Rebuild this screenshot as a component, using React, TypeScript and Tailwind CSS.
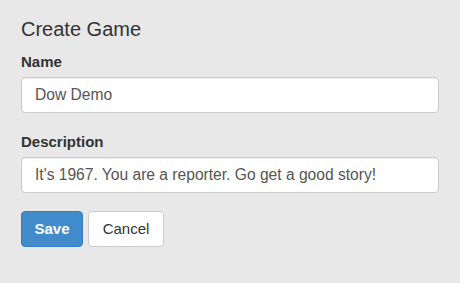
import React from 'react';

export default function App() {
  return (
    <div className="w-[460px] h-[283px] bg-[#e8e8e8] px-[21px] pt-[18px] text-[#333] font-['Liberation_Sans',Arial,sans-serif]">
      <h2 className="text-[20px] leading-[22px] font-normal">Create Game</h2>
      <form className="mt-[12px]" onSubmit={(e) => e.preventDefault()}>
        <div className="mb-[19px]">
          <label className="block text-[15px] leading-[20px] font-bold mb-[5px]">Name</label>
          <input
            defaultValue="Dow Demo"
            className="block w-[418px] h-[36px] px-[13px] bg-white border border-[#ccc] rounded-[4px] text-[15.6px] text-[#555] shadow-[inset_0_1px_1px_rgba(0,0,0,0.075)] outline-none"
          />
        </div>
        <div className="mb-[18px]">
          <label className="block text-[15px] leading-[20px] font-bold mb-[5px]">Description</label>
          <input
            defaultValue="It's 1967. You are a reporter. Go get a good story!"
            className="block w-[418px] h-[36px] px-[13px] bg-white border border-[#ccc] rounded-[4px] text-[15.6px] text-[#555] shadow-[inset_0_1px_1px_rgba(0,0,0,0.075)] outline-none"
          />
        </div>
        <div className="flex gap-[5px]">
          <button type="submit" className="h-[36px] w-[62px] bg-[#428bca] border border-[#357ebd] rounded-[4px] text-white text-[15px] font-bold">
            Save
          </button>
          <button type="button" className="h-[36px] w-[76px] bg-white border border-[#ccc] rounded-[4px] text-[#333] text-[15px]">
            Cancel
          </button>
        </div>
      </form>
    </div>
  );
}
